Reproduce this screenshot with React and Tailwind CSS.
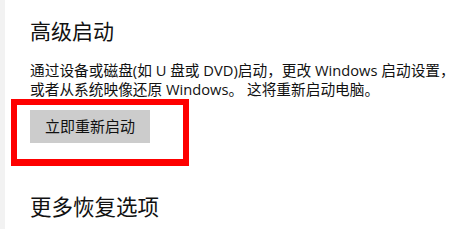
import React from "react";

const cjk = { fontFamily: '"Open Sans", "Noto Sans CJK SC", sans-serif' };

export default function App() {
  return (
    <div className="flex h-[229px] w-[456px] overflow-hidden bg-white text-black" style={cjk}>
      <div className="w-[5px] shrink-0 bg-[#f2f2f2]" />
      <div className="flex flex-col pl-[25px]">
        <h2 className="mt-[17px] text-[21px] leading-[28px] font-normal text-[#111]">高级启动</h2>

        <p className="mt-[16px] text-[14.7px] leading-[19px] text-[#111]">
          <span className="block whitespace-nowrap">通过设备或磁盘(如 U 盘或 DVD)启动，更改 Windows 启动设置，</span>
          <span className="block whitespace-nowrap">或者从系统映像还原 Windows。 这将重新启动电脑。</span>
        </p>

        {/* red annotation frame round the button */}
        <div className="ml-[-19px] mt-[0px] w-[178px] border-[6px] border-b-[7px] border-[#fe0000] pl-[13px] pt-[5px] pb-[16px]">
          <button className="h-[33px] w-[120px] bg-[#cccccc] text-[15px] text-[#111]">立即重新启动</button>
        </div>

        <h2 className="mt-[27px] text-[21.5px] leading-[28px] font-normal text-[#111]">更多恢复选项</h2>
      </div>
    </div>
  );
}
